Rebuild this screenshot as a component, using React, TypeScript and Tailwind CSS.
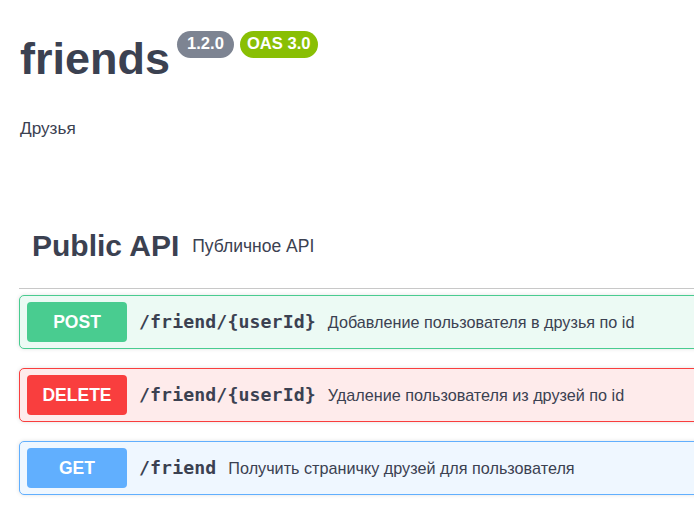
import React from "react";

type Op = {
  method: string;
  path: string;
  summary: string;
  btn: string;
  bg: string;
  border: string;
};

const ops: Op[] = [
  {
    method: "POST",
    path: "/friend/{userId}",
    summary: "Добавление пользователя в друзья по id",
    btn: "bg-[#49cc90]",
    bg: "bg-[#ecfaf4]",
    border: "border-[#49cc90]",
  },
  {
    method: "DELETE",
    path: "/friend/{userId}",
    summary: "Удаление пользователя из друзей по id",
    btn: "bg-[#f93e3e]",
    bg: "bg-[#feebeb]",
    border: "border-[#f93e3e]",
  },
  {
    method: "GET",
    path: "/friend",
    summary: "Получить страничку друзей для пользователя",
    btn: "bg-[#61affe]",
    bg: "bg-[#eff7ff]",
    border: "border-[#61affe]",
  },
];

const OpBlock = ({ op }: { op: Op }) => (
  <div className={`mb-[19px] rounded-[5px] border ${op.border} ${op.bg} shadow-[0_0_4px_rgba(0,0,0,0.12)]`}>
    <div className="flex items-center p-[6px_7px]">
      <div
        className={`${op.btn} flex h-[40px] w-[100px] items-center justify-center rounded-[4px] text-[17.5px] font-bold text-white`}
      >
        {op.method}
      </div>
      <span className="px-[12px] font-['DejaVu_Sans_Mono',monospace] text-[18.2px] font-bold tracking-[0.1px] text-[#3b4151]">
        {op.path}
      </span>
      <span className="text-[16.2px] text-[#3b4151]">{op.summary}</span>
    </div>
  </div>
);

export default function App() {
  return (
    <div className="h-[513px] w-[694px] overflow-hidden bg-white font-['Liberation_Sans',Arial,sans-serif] text-[#3b4151]">
      <div className="w-[900px] pl-[19px]">
        {/* Info */}
        <div className="pl-[1px] pt-[29px]">
          <div className="flex items-start">
            <h2 className="mt-[5px] text-[45px] leading-[50px] font-bold">friends</h2>
            <div className="ml-[7px] flex gap-[6px] pt-[2px]">
              <span className="flex h-[27px] items-center rounded-full bg-[#7d8492] px-[10px] text-[16.6px] font-bold text-white">
                1.2.0
              </span>
              <span className="flex h-[27px] items-center rounded-full bg-[#89bf04] px-[7px] text-[16.6px] font-bold text-white">
                OAS 3.0
              </span>
            </div>
          </div>
          <p className="mt-[34px] text-[17.2px] leading-[20px]">Друзья</p>
        </div>

        {/* Tag section */}
        <div className="mt-[90px]">
          <div className="flex items-center border-b border-[#c8c8c8] px-[13px] pb-[24px]">
            <h3 className="text-[30px] leading-[36px] font-bold">Public API</h3>
            <span className="ml-[13px] text-[17.5px]">Публичное API</span>
          </div>
          <div className="pt-[6px]">
            {ops.map((op) => (
              <OpBlock key={op.method} op={op} />
            ))}
          </div>
        </div>
      </div>
    </div>
  );
}
